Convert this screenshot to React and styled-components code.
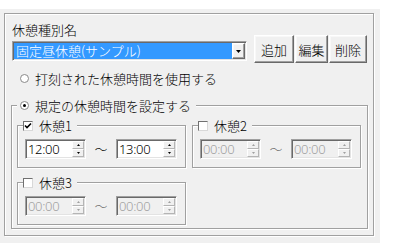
import styled, { createGlobalStyle, css } from "styled-components";

const GlobalStyle = createGlobalStyle`
  body {
    margin: 0;
    background: #fff;
    color: #000;
    font-family: "Noto Sans CJK JP", "Noto Sans", sans-serif;
    font-size: 13px;
    font-weight: 300;
  }
`;

const etched = css`
  border: 1px solid #a0a0a0;
  box-shadow: inset 1px 1px 0 #fff, 1px 1px 0 #fff;
`;

const sunken = css`
  box-sizing: border-box;
  border: 1px solid;
  border-color: #a0a0a0 #fff #fff #a0a0a0;
  box-shadow: inset 1px 1px 0 #696969, inset -1px -1px 0 #e3e3e3;
`;

const raised = css`
  box-sizing: border-box;
  border: 1px solid;
  border-color: #fff #696969 #696969 #fff;
  box-shadow: inset -1px -1px 0 #a0a0a0, inset 1px 1px 0 #f8f8f8;
  background: #f0f0f0;
`;

const Window = styled.div`
  width: 380px;
  height: 234px;
  margin-top: 9px;
  padding: 4px 0 0 4px;
  box-sizing: border-box;
  background: #f0f0f0;
`;

const OuterBox = styled.div`
  ${etched}
  width: 370px;
  box-sizing: border-box;
  padding: 8px 5px 6px 6px;
`;

const TopRow = styled.div`
  display: flex;
  align-items: flex-start;
  gap: 7px;
`;

const LeftCol = styled.div`
  display: flex;
  flex-direction: column;
  gap: 4px;
`;

const Caption = styled.div`
  padding-left: 1px;
  line-height: 15px;
`;

const Select = styled.div`
  ${sunken}
  display: flex;
  width: 235px;
  height: 20px;
  margin-left: 1px;
  padding: 1px;
  background: #fff;
`;

const Selected = styled.div`
  flex: 1;
  background: #3399ff;
  color: #fff;
  line-height: 16px;
  padding-left: 2px;
  white-space: nowrap;
`;

const DropButton = styled.div`
  ${raised}
  width: 13px;
  display: flex;
  align-items: center;
  justify-content: center;
`;

const Buttons = styled.div`
  display: flex;
  gap: 1px;
  margin-top: 13px;
`;

const Button = styled.button`
  ${raised}
  width: ${(p) => p.$w}px;
  height: 28px;
  padding: 0;
  font: inherit;
  color: #000;
`;

const Choice = styled.label`
  display: flex;
  align-items: center;
  gap: 6px;
  line-height: 15px;
  white-space: nowrap;
`;

const RadioRow = styled(Choice)`
  margin: 8px 0 12px 9px;
`;

const RadioMark = styled.span`
  width: 9px;
  height: 9px;
  box-sizing: border-box;
  border-radius: 50%;
  border: 1px solid #8a8a8a;
  background: #fff;
  display: flex;
  align-items: center;
  justify-content: center;
  &::after {
    content: "";
    width: 3px;
    height: 3px;
    border-radius: 50%;
    background: ${(p) => (p.$checked ? "#000" : "transparent")};
  }
`;

const CheckMark = styled.span`
  width: 10px;
  height: 10px;
  box-sizing: border-box;
  border: 1px solid;
  border-color: #707070 #d8d8d8 #d8d8d8 #707070;
  background: #fff;
  display: flex;
  align-items: center;
  justify-content: center;
`;

const Group = styled.fieldset`
  ${etched}
  margin: 0;
  min-width: 0;
  box-sizing: border-box;
  padding: ${(p) => p.$pad};
`;

const Legend = styled.legend`
  padding: ${(p) => p.$pad};
  margin-left: ${(p) => p.$shift || 0}px;
  background: #f0f0f0;
  line-height: 15px;
`;

const BreakGrid = styled.div`
  display: grid;
  grid-template-columns: 169px 169px;
  column-gap: 6px;
  row-gap: 7px;
  align-items: start;
`;

const TimeRow = styled.div`
  display: flex;
  align-items: center;
`;

const Tilde = styled.span`
  width: 30px;
  text-align: center;
  line-height: 16px;
  color: ${(p) => (p.$disabled ? "#6d6d6d" : "#000")};
`;

const Field = styled.div`
  ${sunken}
  display: flex;
  width: 61px;
  height: 20px;
  padding: 1px 1px 1px 2px;
  background: ${(p) => (p.$disabled ? "#f0f0f0" : "#fff")};
`;

const Value = styled.span`
  flex: 1;
  line-height: 16px;
  font-family: "Noto Sans", sans-serif;
  letter-spacing: -0.3px;
  color: ${(p) => (p.$disabled ? "#a0a0a0" : "#000")};
`;

const Spinner = styled.div`
  width: 12px;
  display: flex;
  flex-direction: column;
`;

const SpinButton = styled.div`
  flex: 1;
  box-sizing: border-box;
  border: 1px solid;
  border-color: #fff #b4b4b4 #b4b4b4 #fff;
  background: #f0f0f0;
  display: flex;
  align-items: center;
  justify-content: center;
`;

function Arrow({ up, color = "#000", w = 5 }) {
  const h = Math.ceil(w / 2);
  return (
    <svg width={w} height={h} viewBox={`0 0 ${w} ${h}`}>
      <polygon
        points={up ? `0,${h} ${w},${h} ${w / 2},0` : `0,0 ${w},0 ${w / 2},${h}`}
        fill={color}
      />
    </svg>
  );
}

function TimeField({ value, disabled }) {
  const c = disabled ? "#a0a0a0" : "#000";
  return (
    <Field $disabled={disabled}>
      <Value $disabled={disabled}>{value}</Value>
      <Spinner>
        <SpinButton>
          <Arrow up color={c} w={3} />
        </SpinButton>
        <SpinButton>
          <Arrow color={c} w={3} />
        </SpinButton>
      </Spinner>
    </Field>
  );
}

function BreakGroup({ name, checked, from, to }) {
  const disabled = !checked;
  return (
    <Group $pad="6px 8px 8px 7px">
      <Legend $pad="0 5px 0 0" $shift={-2}>
        <Choice>
          <CheckMark>
            {checked && (
              <svg width="8" height="8" viewBox="0 0 8 8">
                <polyline
                  points="1,3.5 3,5.5 7,1.5"
                  fill="none"
                  stroke="#000"
                  strokeWidth="1.6"
                />
              </svg>
            )}
          </CheckMark>
          {name}
        </Choice>
      </Legend>
      <TimeRow>
        <TimeField value={from} disabled={disabled} />
        <Tilde $disabled={disabled}>～</Tilde>
        <TimeField value={to} disabled={disabled} />
      </TimeRow>
    </Group>
  );
}

const breaks = [
  { name: "休憩1", checked: true, from: "12:00", to: "13:00" },
  { name: "休憩2", checked: false, from: "00:00", to: "00:00" },
  { name: "休憩3", checked: false, from: "00:00", to: "00:00" },
];

export default function App() {
  return (
    <>
      <GlobalStyle />
      <Window>
        <OuterBox>
          <TopRow>
            <LeftCol>
              <Caption>休憩種別名</Caption>
              <Select>
                <Selected>固定昼休憩(サンプル)</Selected>
                <DropButton>
                  <Arrow />
                </DropButton>
              </Select>
            </LeftCol>
            <Buttons>
              <Button $w={40}>追加</Button>
              <Button $w={33}>編集</Button>
              <Button $w={38}>削除</Button>
            </Buttons>
          </TopRow>
          <RadioRow>
            <RadioMark />
            打刻された休憩時間を使用する
          </RadioRow>
          <Group $pad="5px 6px 3px 5px">
            <Legend $pad="0 5px 0 3px">
              <Choice>
                <RadioMark $checked />
                規定の休憩時間を設定する
              </Choice>
            </Legend>
            <BreakGrid>
              {breaks.map((b) => (
                <BreakGroup key={b.name} {...b} />
              ))}
            </BreakGrid>
          </Group>
        </OuterBox>
      </Window>
    </>
  );
}
